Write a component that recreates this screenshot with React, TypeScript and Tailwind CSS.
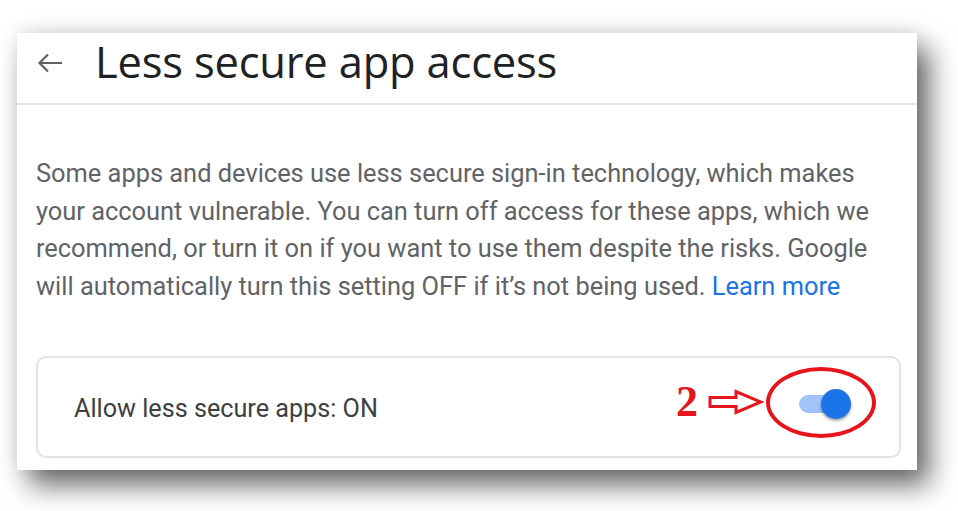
export default function App() {
  return (
    <div className="w-[958px] h-[511px] bg-white overflow-hidden pl-[17px] pt-[33px]">
      <div className="w-[900px] h-[437px] bg-white flex flex-col shadow-[12px_15px_26px_rgba(0,0,0,0.6),0_-4px_18px_rgba(0,0,0,0.08)]">
        {/* header */}
        <div className="h-[72px] flex items-center pb-[12px] border-b-2 border-[#e3e3e8] shrink-0">
          <svg className="ml-[20px] mr-[32px] mt-[2px]" width="26" height="22" viewBox="0 0 26 22" fill="none">
            <path d="M25 11H2.5M11 2.5L2.5 11l8.5 8.5" stroke="#5f6368" strokeWidth="2.2" />
          </svg>
          <h1 className="text-[43.5px] leading-none text-[#202124] font-['Open_Sans',sans-serif] tracking-[-0.2px]">
            Less secure app access
          </h1>
        </div>

        {/* body */}
        <div className="flex flex-col pl-[19px] pr-[16px]">
          <p className="mt-[50px] w-[850px] text-[25.4px] leading-[37.5px] text-[#5f6368] font-['Roboto',sans-serif]">
            Some apps and devices use less secure sign-in technology, which makes your account vulnerable. You can turn off access for these apps, which we recommend, or turn it on if you want to use them despite the risks. Google will automatically turn this setting OFF if it’s not being used.{' '}
            <span className="text-[#1a73e8]">Learn more</span>
          </p>

          <div className="mt-[51px] h-[102px] rounded-[10px] border-2 border-[#e3e3e8] flex items-center pl-[36px] pr-[23px]">
            <span className="text-[25.2px] mt-[4px] text-[#3c4043] font-['Roboto',sans-serif]">Allow less secure apps: ON</span>
            <div className="ml-auto mb-[10px] flex items-center">
              <span className="text-[44px] leading-none font-bold text-[#e8141c] font-['Liberation_Serif',serif]">2</span>
              <svg className="ml-[10px]" width="56" height="26" viewBox="0 0 56 26" fill="none">
                <path d="M2 8.5H28V2.5L53 13L28 23.5V17.5H2Z" stroke="#e8141c" strokeWidth="3" fill="white" />
              </svg>
              <div className="ml-[2px] w-[110px] h-[71px] rounded-[50%] border-[4px] border-[#e8141c] flex items-center justify-center">
                <div className="relative w-[46px] h-[18px] ml-[2px] mt-[4px]">
                  <div className="absolute inset-0 rounded-full bg-[#a0c3fa]" />
                  <div className="absolute right-[-6px] top-[-6px] w-[30px] h-[30px] rounded-full bg-[#1a73e8] shadow-[0_2px_3px_rgba(0,0,0,0.35)]" />
                </div>
              </div>
            </div>
          </div>
        </div>
      </div>
    </div>
  );
}
